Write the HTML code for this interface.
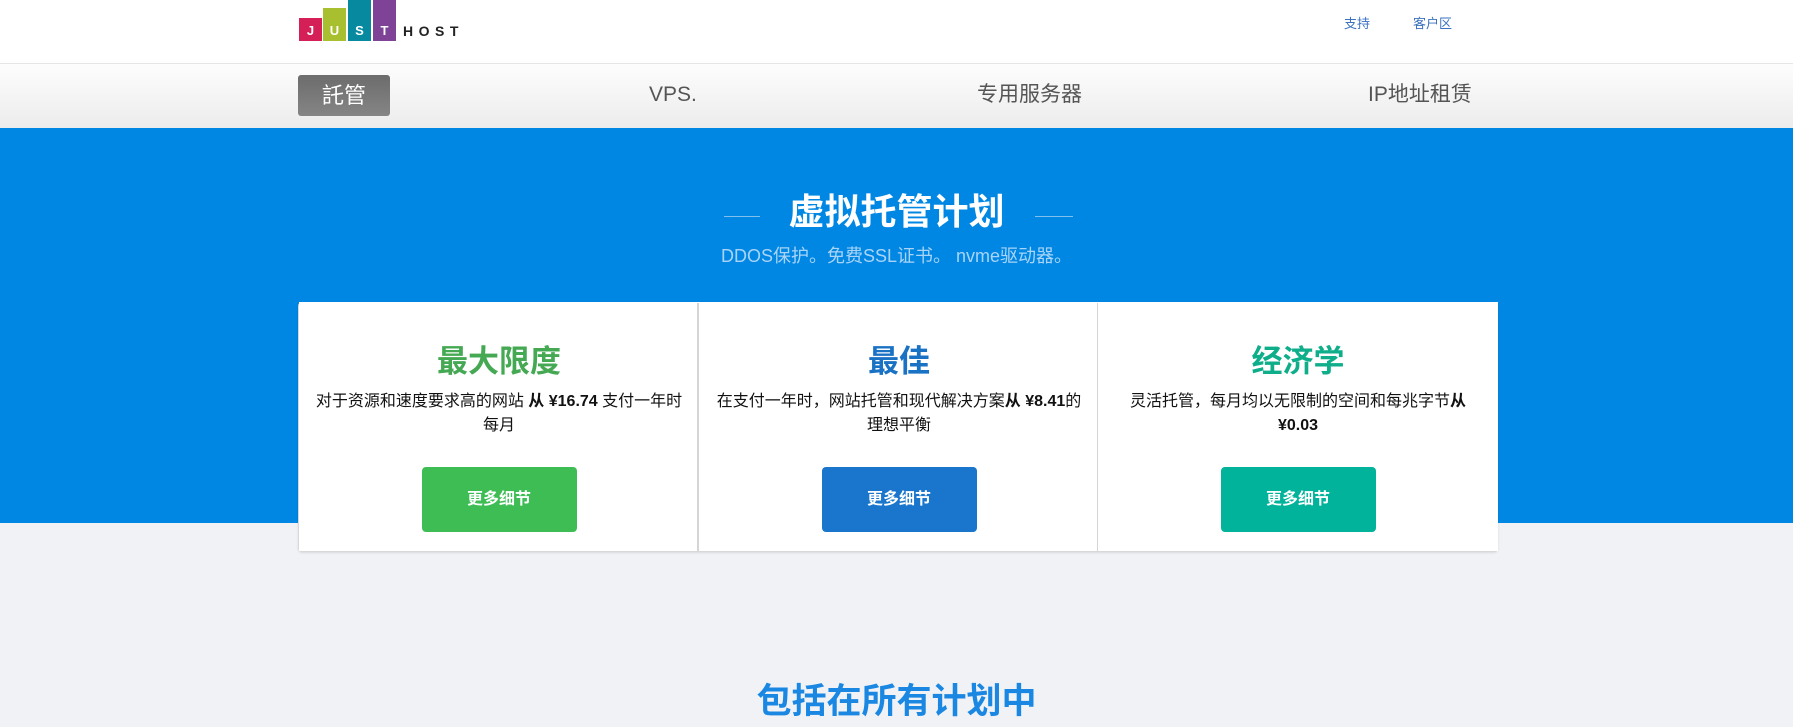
<!DOCTYPE html>
<html><head><meta charset="utf-8"><style>
*{margin:0;padding:0;box-sizing:border-box}
body{width:1793px;height:727px;overflow:hidden;background:#f1f2f6;font-family:"Liberation Sans","Noto Sans CJK SC",sans-serif;position:relative}
.abs{position:absolute}
.hdr{left:0;top:0;width:1793px;height:64px;background:#fff;border-bottom:1px solid #e6e6e6}
.nav{left:0;top:64px;width:1793px;height:64px;background:linear-gradient(#fdfdfd,#ececec)}
.blue{left:0;top:128px;width:1793px;height:395px;background:#0087e3}
.nv{font-size:21px;color:#555;top:80px;line-height:30px}
.card{top:302px;height:249px;width:400px;background:#fff;text-align:center}
.card h2{font-size:31px;margin-top:40px;line-height:40px}
.card p{font-size:16px;color:#111;line-height:24px;margin:8px 0 0;height:48px;white-space:nowrap}
.btn{display:block;width:155px;height:65px;margin:29px auto 0;border-radius:4px;color:#fff;font-weight:bold;font-size:16px;line-height:65px}
.lb{color:#fff;font-size:13px;font-weight:bold;text-align:center;line-height:14px;padding-top:0}
</style></head><body>
<div class="abs hdr"></div>
<div class="abs lb" style="left:299px;top:18px;width:23px;height:23px;background:#d41f57;padding-top:6px">J</div>
<div class="abs lb" style="left:323px;top:8px;width:23px;height:33px;background:#a8c030;padding-top:16px">U</div>
<div class="abs lb" style="left:348px;top:0;width:23px;height:41px;background:#078aa0;padding-top:24px">S</div>
<div class="abs lb" style="left:373px;top:0;width:23px;height:41px;background:#7e4397;padding-top:24px">T</div>
<div class="abs" style="left:403px;top:23px;font-size:14px;font-weight:bold;letter-spacing:5.5px;color:#222">HOST</div>
<div class="abs" style="left:1344px;top:13px;font-size:13px;color:#3a72c0">支持</div>
<div class="abs" style="left:1413px;top:13px;font-size:13px;color:#3a72c0">客户区</div>
<div class="abs nav"></div>
<div class="abs" style="left:298px;top:75px;width:92px;height:41px;background:linear-gradient(#6c6c6c,#858585);border-radius:3px;color:#fff;font-size:22px;text-align:center;line-height:41px">託管</div>
<div class="abs nv" style="left:649px">VPS.</div>
<div class="abs nv" style="left:977px">专用服务器</div>
<div class="abs nv" style="left:1368px">IP地址租赁</div>
<div class="abs blue"></div>
<div class="abs" style="left:724px;top:216px;width:36px;height:1px;background:#7fc0ef"></div>
<div class="abs" style="left:1035px;top:216px;width:38px;height:1px;background:#7fc0ef"></div>
<div class="abs" style="left:0;width:1793px;top:189px;text-align:center;color:#fff;font-size:36px;font-weight:bold;line-height:46px">虚拟托管计划</div>
<div class="abs" style="left:0;width:1793px;top:244px;text-align:center;color:#a9d4f7;font-size:18px;line-height:24px">DDOS保护。免费SSL证书。 nvme驱动器。</div>
<div class="abs" style="left:298px;top:302px;width:1200px;height:250px;border:1px solid #d8d8d8;border-radius:4px;background:#fff;box-shadow:0 1px 2px rgba(0,0,0,.1)"></div>
<div class="abs card" style="left:299px">
<h2 style="color:#45a853">最大限度</h2>
<p>对于资源和速度要求高的网站 <b>从 ¥16.74</b> 支付一年时<br>每月</p>
<a class="btn" style="background:#3dbd54">更多细节</a></div>
<div class="abs" style="left:697px;top:303px;width:2px;height:248px;background:#d5d5d5"></div>
<div class="abs card" style="left:699px">
<h2 style="color:#1a72c4">最佳</h2>
<p>在支付一年时，网站托管和现代解决方案<b>从 ¥8.41</b>的<br>理想平衡</p>
<a class="btn" style="background:#1976cc">更多细节</a></div>
<div class="abs" style="left:1097px;top:303px;width:2px;height:248px;background:#d5d5d5"></div>
<div class="abs card" style="left:1098px">
<h2 style="color:#0fae8b">经济学</h2>
<p>灵活托管，每月均以无限制的空间和每兆字节<b>从</b><br><b>¥0.03</b></p>
<a class="btn" style="background:#00b39a">更多细节</a></div>
<div class="abs" style="left:0;width:1793px;top:679px;text-align:center;color:#1a88e2;font-size:35px;font-weight:bold;line-height:46px">包括在所有计划中</div>
</body></html>
